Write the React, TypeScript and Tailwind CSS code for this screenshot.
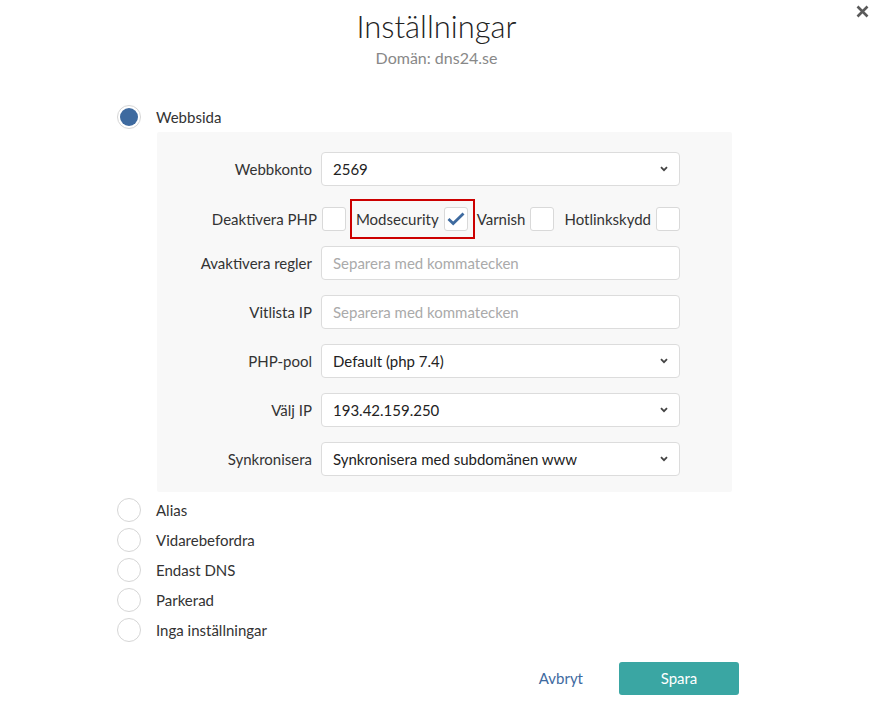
import React from 'react';

const font = { fontFamily: '"Lato", "Noto Sans", sans-serif' };

function Radio({ label, checked = false }: { label: string; checked?: boolean }) {
  return (
    <div className="flex items-center h-[24px]">
      <span className="w-[24px] h-[24px] rounded-full border border-[#d6d6d6] bg-white flex items-center justify-center">
        {checked && <span className="w-[18px] h-[18px] rounded-full bg-[#3e6a9f]" />}
      </span>
      <span className="ml-[15px] text-[15px] text-[#333]">{label}</span>
    </div>
  );
}

function Checkbox({ checked = false }: { checked?: boolean }) {
  return (
    <span className="w-[24px] h-[24px] rounded-[3px] border border-[#d9d9d9] bg-white flex items-center justify-center">
      {checked && (
        <svg width="18" height="14" viewBox="0 0 18 14">
          <path d="M1.5 7 L6.2 11.6 L16.5 1.5" fill="none" stroke="#3e6a9f" strokeWidth="2.8" strokeLinejoin="miter" />
        </svg>
      )}
    </span>
  );
}

function Chevron() {
  return (
    <svg width="8" height="6" viewBox="0 0 8 6" className="mr-[11px]">
      <path d="M1 1.2 L4 4.2 L7 1.2" fill="none" stroke="#444" strokeWidth="1.8" />
    </svg>
  );
}

function Row({ label, children }: { label: string; children: React.ReactNode }) {
  return (
    <div className="flex items-center">
      <span className="w-[159px] pr-[4px] text-right text-[15px] text-[#333] whitespace-nowrap">{label}</span>
      <div className="ml-[5px] w-[359px]">{children}</div>
    </div>
  );
}

function Select({ value }: { value: string }) {
  return (
    <div className="h-[34px] rounded-[4px] border border-[#dcdcdc] bg-white flex items-center justify-between pl-[11px] text-[15px] text-[#222]">
      <span>{value}</span>
      <Chevron />
    </div>
  );
}

function TextInput({ placeholder }: { placeholder: string }) {
  return (
    <div className="h-[34px] rounded-[4px] border border-[#dcdcdc] bg-white flex items-center pl-[11px] text-[15px] text-[#aaa]">
      {placeholder}
    </div>
  );
}

export default function App() {
  return (
    <div className="relative w-[880px] h-[706px] bg-white overflow-hidden" style={font}>
      <button className="absolute top-[1px] right-[8px] w-[20px] h-[20px] flex items-center justify-center">
        <svg width="13" height="13" viewBox="0 0 13 13">
          <path d="M1.5 1.5 L11.5 11.5 M11.5 1.5 L1.5 11.5" stroke="#5a5a5a" strokeWidth="2.6" />
        </svg>
      </button>

      <div className="flex flex-col items-center pt-[6px] pr-[7px]">
        <h1 className="text-[31px] font-light text-[#222] leading-[40px]">Inställningar</h1>
        <p className="text-[16px] text-[#888] leading-[22px] mt-[1px]">Domän: dns24.se</p>
      </div>

      <div className="pl-[117px] mt-[36px]">
        <Radio label="Webbsida" checked />

        <div className="ml-[40px] mt-[3px] w-[575px] bg-[#f8f8f8] rounded-[2px] pt-[20px] pb-[16px] flex flex-col">
          <Row label="Webbkonto">
            <Select value="2569" />
          </Row>

          <div className="mt-[13px] h-[40px] flex items-center justify-end pr-[52px] text-[15px] text-[#333]">
            <span>Deaktivera PHP</span>
            <span className="ml-[5px]"><Checkbox /></span>
            <div className="ml-[4px] h-[40px] border-2 border-[#c00] flex items-center pl-[4px] pr-[5px]">
              <span>Modsecurity</span>
              <span className="ml-[5px]"><Checkbox checked /></span>
            </div>
            <span className="ml-[2px]">Varnish</span>
            <span className="ml-[5px]"><Checkbox /></span>
            <span className="ml-[10px]">Hotlinkskydd</span>
            <span className="ml-[5px]"><Checkbox /></span>
          </div>

          <div className="mt-[7px] flex flex-col gap-[15px]">
            <Row label="Avaktivera regler">
              <TextInput placeholder="Separera med kommatecken" />
            </Row>
            <Row label="Vitlista IP">
              <TextInput placeholder="Separera med kommatecken" />
            </Row>
            <Row label="PHP-pool">
              <Select value="Default (php 7.4)" />
            </Row>
            <Row label="Välj IP">
              <Select value="193.42.159.250" />
            </Row>
            <Row label="Synkronisera">
              <Select value="Synkronisera med subdomänen www" />
            </Row>
          </div>
        </div>

        <div className="mt-[6px] flex flex-col gap-[6px]">
          <Radio label="Alias" />
          <Radio label="Vidarebefordra" />
          <Radio label="Endast DNS" />
          <Radio label="Parkerad" />
          <Radio label="Inga inställningar" />
        </div>
      </div>

      <div className="absolute right-[141px] bottom-[11px] flex items-center">
        <button className="text-[15px] text-[#3e6a9f] mr-[36px]">Avbryt</button>
        <button className="w-[120px] h-[33px] rounded-[3px] bg-[#3aa6a3] text-white text-[15px]">Spara</button>
      </div>
    </div>
  );
}
